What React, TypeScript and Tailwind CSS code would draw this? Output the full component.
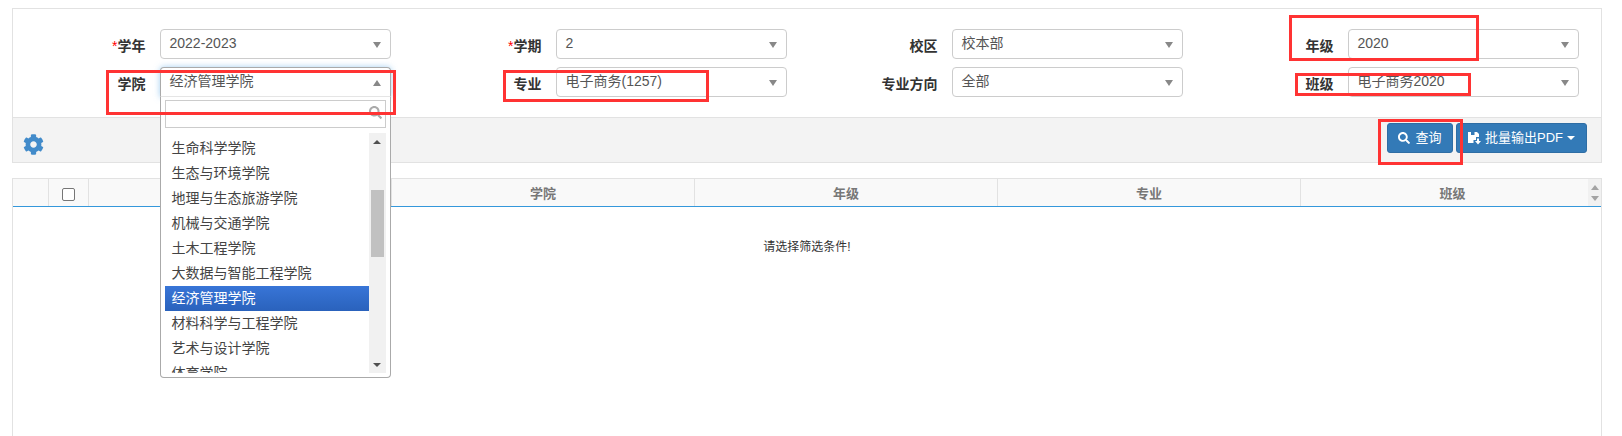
import { FaCog, FaSearch } from "react-icons/fa"

const font = { fontFamily: '"Liberation Sans", "Noto Sans CJK SC", sans-serif' }

const colleges = [
  "生命科学学院",
  "生态与环境学院",
  "地理与生态旅游学院",
  "机械与交通学院",
  "土木工程学院",
  "大数据与智能工程学院",
  "经济管理学院",
  "材料科学与工程学院",
  "艺术与设计学院",
  "体育学院",
]

function Field({
  label,
  value,
  required,
  open,
}: {
  label: string
  value: string
  required?: boolean
  open?: boolean
}) {
  return (
    <div className="flex">
      <label className="w-[146.5px] shrink-0 pt-[6px] pr-[14px] text-right text-[14px] leading-[22px] font-bold text-[#333]">
        {required ? <span className="font-normal text-[#ff0000]">*</span> : null}
        {label}
      </label>
      <div className="relative w-[231px]">
        <div
          className={
            open
              ? "flex h-[30px] items-start justify-between rounded-t border border-[#aaa] border-b-[#e5e5e5] bg-white pr-[8px] pl-[9px] text-[14px] leading-[26px] text-[#555] shadow-[0_0_6px_rgba(102,175,233,0.6)]"
              : "flex h-[30px] items-start justify-between rounded border border-[#ccc] bg-white pr-[8px] pl-[9px] text-[14px] leading-[26px] text-[#555]"
          }
        >
          <span>{value}</span>
          {open ? (
            <span className="mt-[12px] mr-[1px] h-0 w-0 border-x-[4px] border-b-[6px] border-x-transparent border-b-[#888]" />
          ) : (
            <span className="mt-[12px] mr-[1px] h-0 w-0 border-x-[4px] border-t-[6px] border-x-transparent border-t-[#888]" />
          )}
        </div>
        {open ? <Dropdown /> : null}
      </div>
    </div>
  )
}

function Dropdown() {
  return (
    <div className="absolute top-[30px] left-0 z-10 h-[281px] w-[231px] overflow-hidden rounded-b border border-t-0 border-[#aaa] bg-white pt-[3px] pr-[4px] pl-[4px]">
      <div className="flex h-[28px] items-start justify-end border border-[#ccc] pt-[5px] pr-[3px]">
        <FaSearch className="text-[13px] text-[#aaa]" />
      </div>
      <div className="mt-[5px] flex h-[240px] overflow-hidden">
        <ul className="w-[204px] pt-[3px]">
          {colleges.map((name) => (
            <li
              key={name}
              className={
                name === "经济管理学院"
                  ? "h-[25px] bg-gradient-to-b from-[#3875d7] to-[#2a62bc] pl-[7px] text-[14px] leading-[25px] text-white"
                  : "h-[25px] pl-[7px] text-[14px] leading-[25px] text-[#444]"
              }
            >
              {name}
            </li>
          ))}
        </ul>
        <div className="flex w-[17px] flex-col items-center bg-[#f1f1f1]">
          <span className="mt-[7px] h-0 w-0 border-x-[4px] border-b-[4px] border-x-transparent border-b-[#505050]" />
          <span className="mt-[46px] h-[67px] w-[13px] bg-[#c1c1c1]" />
          <span className="mt-[106px] h-0 w-0 border-x-[4px] border-t-[4px] border-x-transparent border-t-[#505050]" />
        </div>
      </div>
    </div>
  )
}

function ExportIcon() {
  return (
    <svg width="13" height="13" viewBox="0 0 13 13" fill="white">
      <path d="M0 0h9l2 2v3H8v3H5.5v3H0z" />
      <path d="M3 0h3.5v3H3z" fill="#337ab7" />
      <path d="M9 6.5h2V9h2l-3 3.5L7 9h2z" />
    </svg>
  )
}

export default function App() {
  return (
    <div className="h-[436px] overflow-hidden bg-white pt-[8px] pl-[12px]" style={font}>
      <div className="w-[1590px] border border-[#e2e2e2]">
        <div className="grid grid-cols-[repeat(4,396px)] gap-y-[8px] pt-[20px] pb-[20px]">
          <Field label="学年" value="2022-2023" required />
          <Field label="学期" value="2" required />
          <Field label="校区" value="校本部" />
          <Field label="年级" value="2020" />
          <Field label="学院" value="经济管理学院" open />
          <Field label="专业" value="电子商务(1257)" />
          <Field label="专业方向" value="全部" />
          <Field label="班级" value="电子商务2020" />
        </div>
        <div className="flex h-[45px] items-start justify-between border-t border-[#e2e2e2] bg-[#f3f3f3] pt-[5px] pr-[14px] pl-[10px]">
          <FaCog className="mt-[11px] text-[21px] text-[#428bca]" />
          <div className="flex gap-[3px] text-[13px] text-white">
            <button className="flex h-[30px] w-[66px] items-center justify-center gap-[5px] rounded-[3px] border border-[#2e6da4] bg-[#337ab7]">
              <FaSearch className="text-[12px]" />
              查询
            </button>
            <button className="flex h-[30px] w-[131px] items-center justify-center gap-[4px] rounded-[3px] border border-[#2e6da4] bg-[#337ab7]">
              <ExportIcon />
              批量输出PDF
              <span className="h-0 w-0 border-x-[4px] border-t-[4px] border-x-transparent border-t-white" />
            </button>
          </div>
        </div>
      </div>
      <div className="relative mt-[15px] h-[300px] w-[1590px] overflow-hidden border border-b-0 border-[#e2e2e2]">
        <div className="flex h-[28px] border-b border-[#3498db] bg-[#f9f9f9] text-[13px] leading-[29px] font-bold text-[#777]">
          <div className="w-[36px] shrink-0 border-r border-[#e2e2e2]" />
          <div className="flex w-[40px] shrink-0 items-center justify-center border-r border-[#e2e2e2]">
            <span className="mt-[3px] h-[13px] w-[13px] rounded-[2px] border border-[#767676] bg-white" />
          </div>
          <div className="w-[303px] shrink-0 border-r border-[#e2e2e2]" />
          <div className="w-[303px] shrink-0 border-r border-[#e2e2e2] text-center">学院</div>
          <div className="w-[303px] shrink-0 border-r border-[#e2e2e2] text-center">年级</div>
          <div className="w-[303px] shrink-0 border-r border-[#e2e2e2] text-center">专业</div>
          <div className="w-[303px] shrink-0 text-center">班级</div>
        </div>
        <div className="absolute top-0 right-0 flex h-[27px] w-[13px] flex-col items-center justify-center gap-[6px] bg-[#f1f1f1]">
          <span className="h-0 w-0 border-x-[4px] border-b-[5px] border-x-transparent border-b-[#a3a3a3]" />
          <span className="h-0 w-0 border-x-[4px] border-t-[5px] border-x-transparent border-t-[#a3a3a3]" />
        </div>
        <p className="pt-[31px] text-center text-[12px] leading-[18px] text-[#333]">请选择筛选条件!</p>
      </div>

      {/* red marks drawn over the screenshot */}
      <div className="pointer-events-none absolute top-[70px] left-[106px] z-20 h-[45px] w-[290px] border-[3px] border-[#ff3333]" />
      <div className="pointer-events-none absolute top-[70px] left-[503px] z-20 h-[32px] w-[206px] border-[3px] border-[#ff3333]" />
      <div className="pointer-events-none absolute top-[15px] left-[1289px] z-20 h-[46px] w-[190px] border-[3px] border-[#ff3333]" />
      <div className="pointer-events-none absolute top-[73px] left-[1295px] z-20 h-[23px] w-[176px] border-[3px] border-[#ff3333]" />
      <div className="pointer-events-none absolute top-[119px] left-[1378px] z-20 h-[46px] w-[85px] border-[3px] border-[#ff3333]" />
    </div>
  )
}
